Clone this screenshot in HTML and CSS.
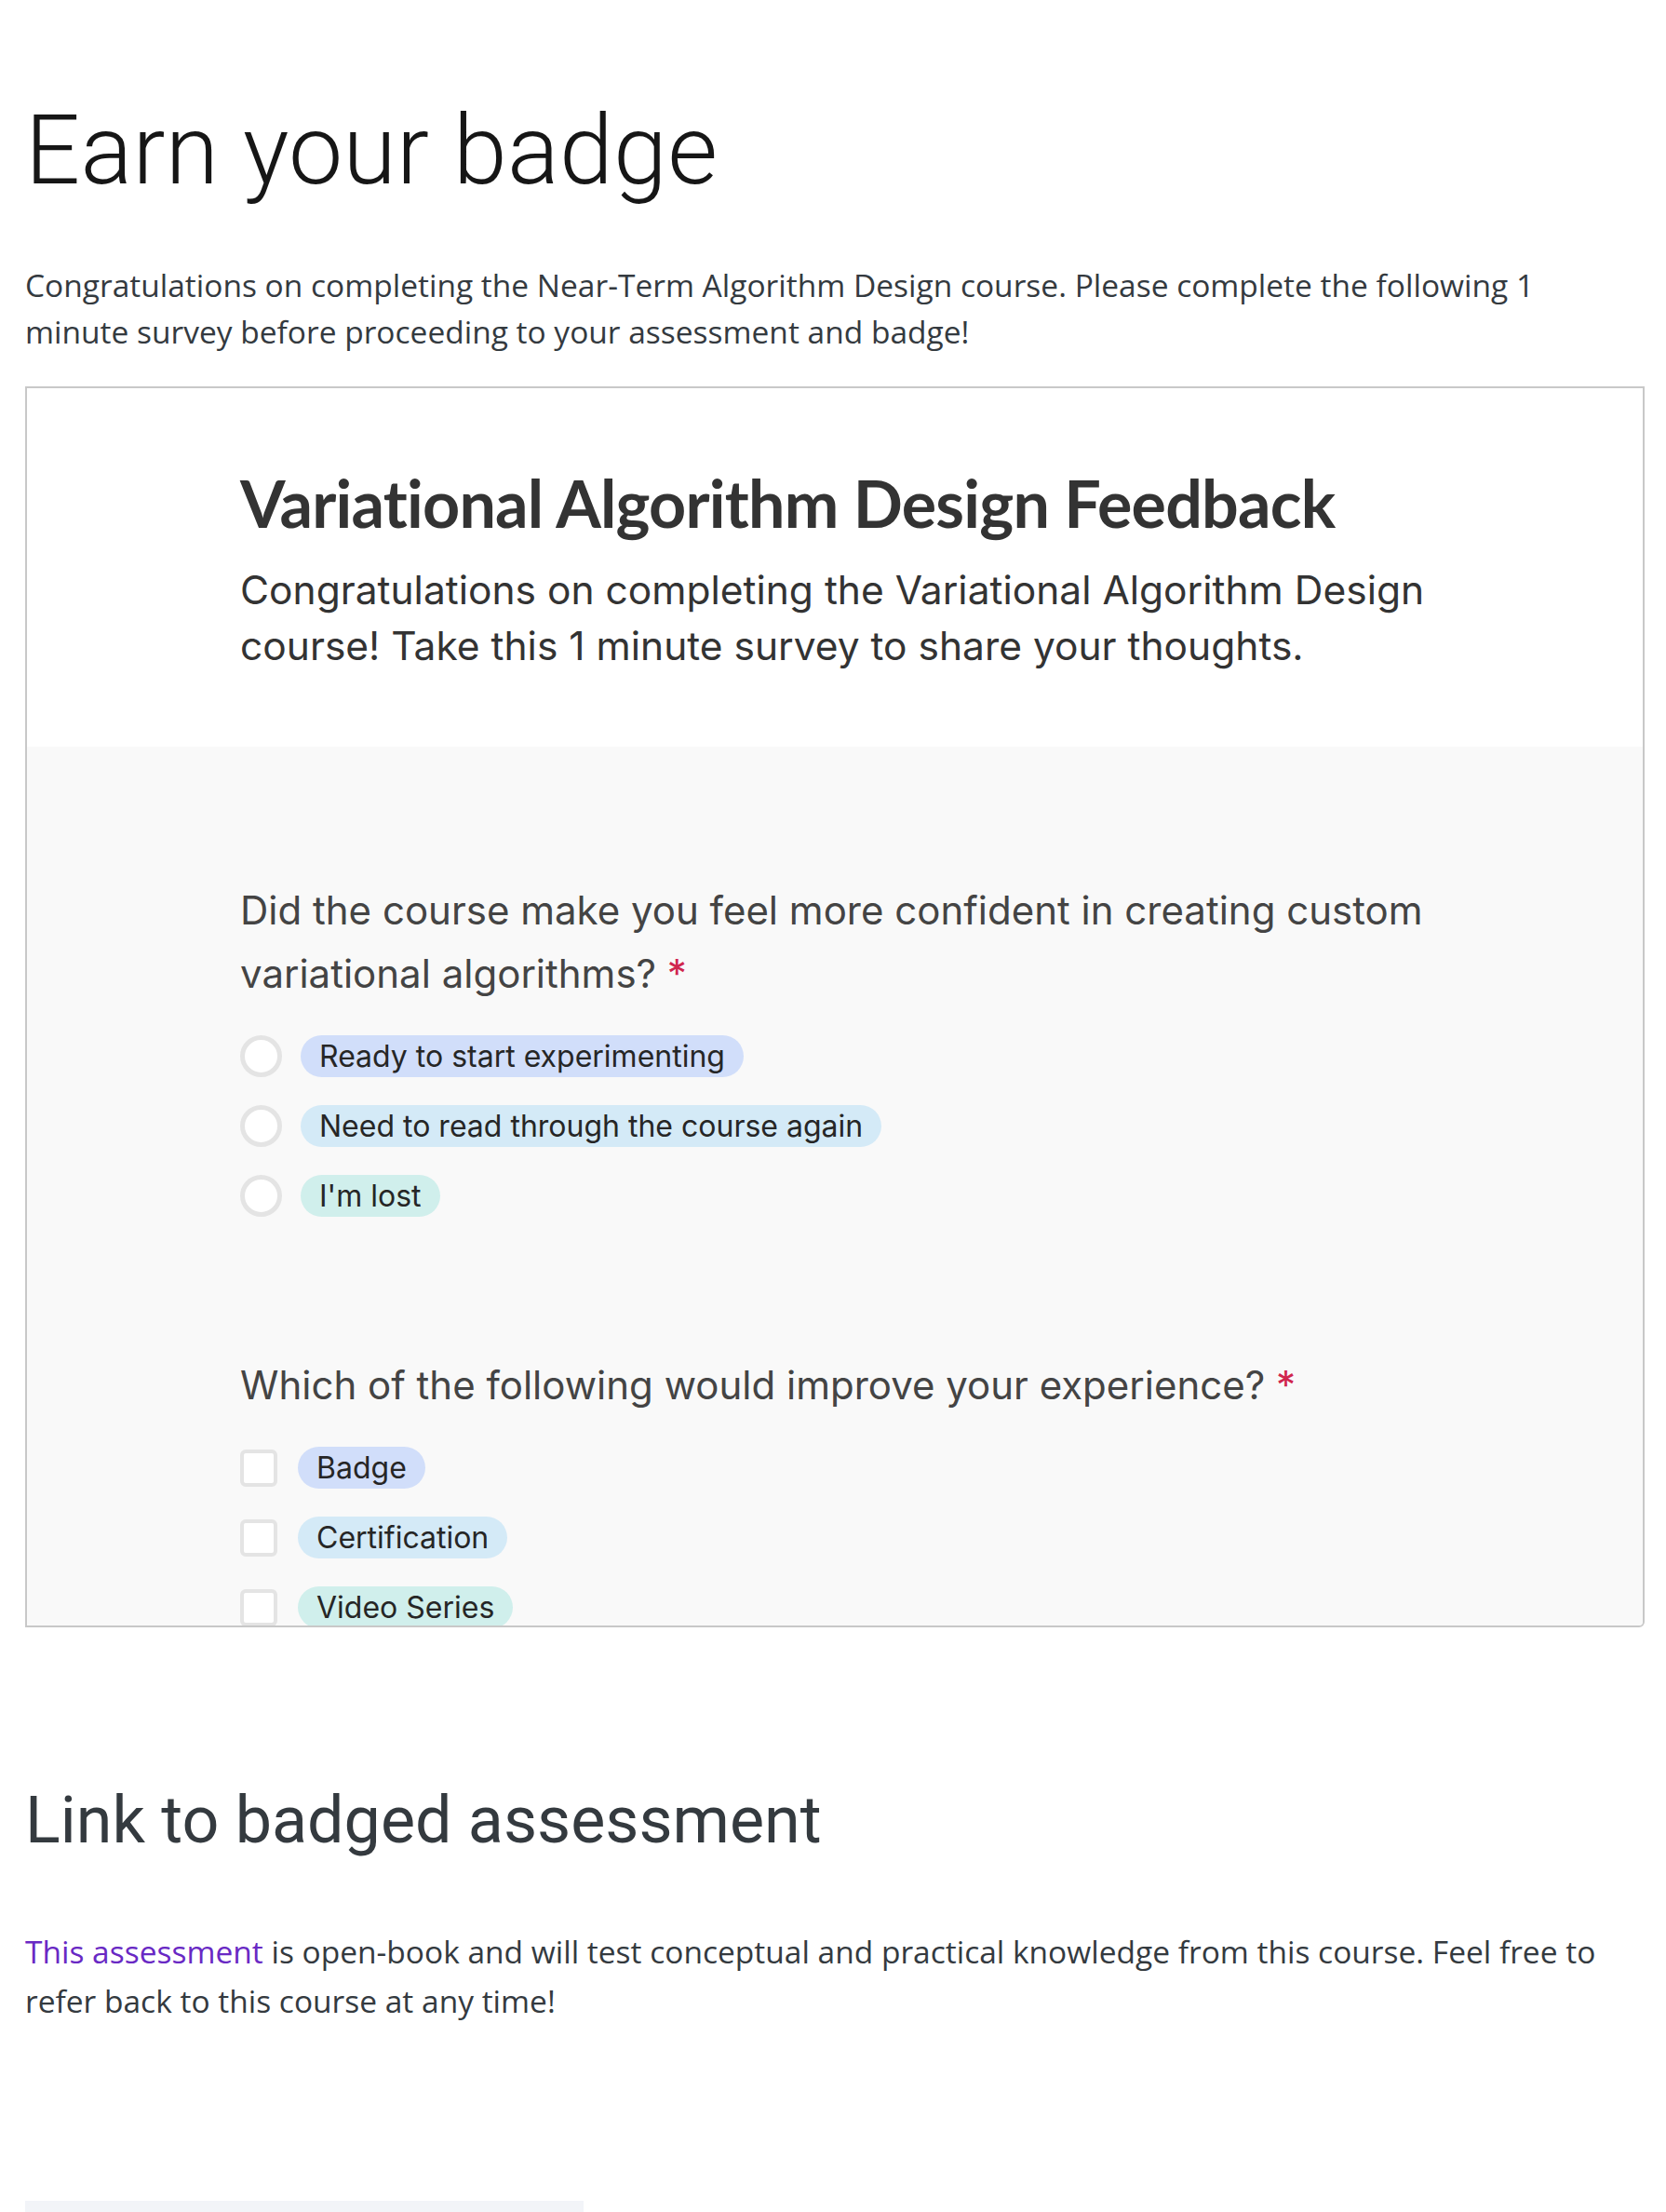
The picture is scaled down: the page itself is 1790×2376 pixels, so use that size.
FILE: index.html
```html
<!DOCTYPE html>
<html lang="en">
<head>
<meta charset="utf-8">
<title>Earn your badge</title>
<link rel="stylesheet" href="styles.css">
</head>
<body>
<main class="page">
  <h1 class="page-title">Earn your badge</h1>
  <p class="lead">Congratulations on completing the Near-Term Algorithm Design course. Please complete the following 1 minute survey before proceeding to your assessment and badge!</p>

  <section class="survey-frame">
    <header class="survey-head">
      <div class="col">
        <h2 class="survey-title">Variational Algorithm Design Feedback</h2>
        <p class="survey-desc">Congratulations on completing the Variational Algorithm Design course! Take this 1 minute survey to share your thoughts.</p>
      </div>
    </header>
    <div class="survey-body">
      <div class="col">
        <div class="question">
          <div class="q-text">Did the course make you feel more confident in creating custom variational algorithms? <span class="req">*</span></div>
          <ul class="options">
            <li class="option"><span class="radio"></span><span class="pill pill-a">Ready to start experimenting</span></li>
            <li class="option"><span class="radio"></span><span class="pill pill-b">Need to read through the course again</span></li>
            <li class="option"><span class="radio"></span><span class="pill pill-c">I'm lost</span></li>
          </ul>
        </div>
        <div class="question q-second">
          <div class="q-text">Which of the following would improve your experience? <span class="req">*</span></div>
          <ul class="options">
            <li class="option"><span class="check"></span><span class="pill pill-a">Badge</span></li>
            <li class="option"><span class="check"></span><span class="pill pill-b">Certification</span></li>
            <li class="option"><span class="check"></span><span class="pill pill-c">Video Series</span></li>
          </ul>
        </div>
      </div>
    </div>
  </section>

  <h2 class="section-title">Link to badged assessment</h2>
  <p class="body-text"><a class="link" href="#">This assessment</a> is open-book and will test conceptual and practical knowledge from this course. Feel free to refer back to this course at any time!</p>
  <div class="footer-bar"></div>
</main>
</body>
</html>
```

FILE: styles.css
```css
* { box-sizing: border-box; }

html, body {
  margin: 0;
  padding: 0;
  background: #ffffff;
}

body {
  font-family: "Roboto", "Liberation Sans", sans-serif;
  color: #343a3f;
}

.page {
  padding: 0 23px 0 27px;
  overflow: hidden;
}

.page-title {
  margin: 99px 0 0;
  font-size: 104px;
  line-height: 125px;
  font-weight: 300;
  color: #161616;
  letter-spacing: 0.3px;
}

.lead {
  margin: 57px 0 0;
  font-family: "Open Sans", "Noto Sans", sans-serif;
  font-size: 33.5px;
  line-height: 50px;
  font-weight: 400;
  color: #343a3f;
}

.survey-frame {
  margin-top: 34px;
  height: 1333px;
  border: 2px solid #c8c8c8;
  overflow: hidden;
  background: #f9f9f9;
  border-radius: 0 0 6px 0;
}

.col {
  width: 1282px;
  margin: 0 auto 0 229px;
}

.survey-head {
  background: #ffffff;
  padding: 81px 0 78px;
}

.survey-title {
  margin: 0;
  font-family: "Lato", "Noto Sans", sans-serif;
  font-weight: 700;
  font-size: 70px;
  line-height: 84px;
  color: #333333;
  letter-spacing: -0.8px;
}

.survey-desc {
  margin: 22px 0 0;
  font-family: "Inter", "Liberation Sans", sans-serif;
  font-size: 42.5px;
  line-height: 60px;
  color: #333333;
}

.survey-body {
  padding-top: 142px;
  background: #f9f9f9;
}

.question {
  font-family: "Inter", "Liberation Sans", sans-serif;
}

.q-second {
  margin-top: 147px;
}

.q-text {
  font-size: 42px;
  line-height: 68px;
  color: #444444;
}

.req {
  color: #d0264e;
}

.options {
  list-style: none;
  margin: 32px 0 0;
  padding: 0;
  display: flex;
  flex-direction: column;
  gap: 30px;
}

.option {
  display: flex;
  align-items: center;
  gap: 20px;
  height: 45px;
}

.radio {
  width: 45px;
  height: 45px;
  border-radius: 50%;
  border: 5px solid #e4e4e4;
  background: #ffffff;
  flex: none;
}

.check {
  width: 40px;
  height: 40px;
  border-radius: 6px;
  border: 4px solid #e4e4e4;
  background: #ffffff;
  flex: none;
  margin-right: 2px;
}

.pill {
  display: inline-flex;
  align-items: center;
  height: 45px;
  padding: 0 20px;
  border-radius: 23px;
  font-size: 32px;
  color: #262626;
}

.pill-a { background: #d1defa; }
.pill-b { background: #d4eaf7; }
.pill-c { background: #d0efec; }

.section-title {
  margin: 166px 0 0;
  font-size: 70px;
  line-height: 82px;
  font-weight: 400;
  color: #343a3f;
}

.body-text {
  margin: 74px 0 0;
  font-family: "Open Sans", "Noto Sans", sans-serif;
  font-size: 33.5px;
  line-height: 53px;
  color: #343a3f;
}

.link {
  color: #6929c4;
  text-decoration: none;
}

.footer-bar {
  margin-top: 188px;
  width: 600px;
  height: 60px;
  background: #f2f4f8;
}
```
